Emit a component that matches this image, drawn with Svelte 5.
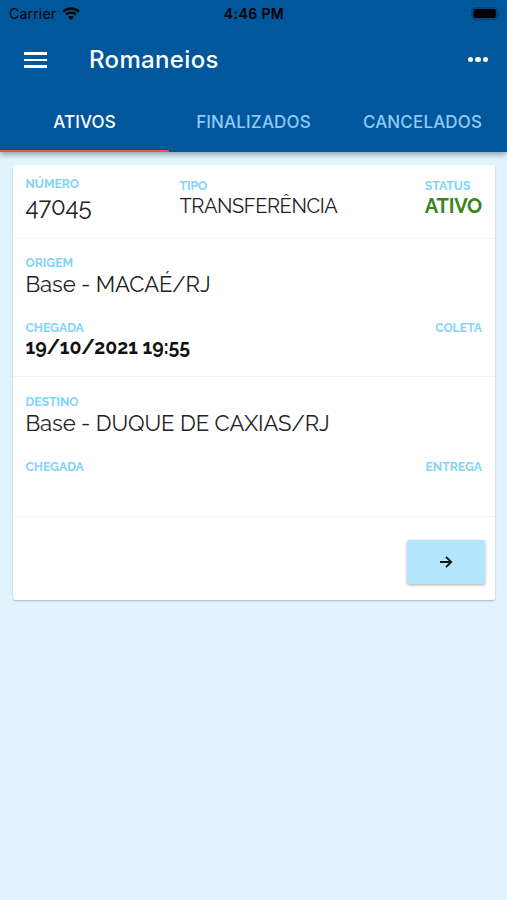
<script lang="ts">
	let activeTab = 'ATIVOS';

	const tabs = ['ATIVOS', 'FINALIZADOS', 'CANCELADOS'];

	const romaneio = {
		numero: '47045',
		tipo: 'TRANSFERÊNCIA',
		status: 'ATIVO',
		origem: 'Base - MACAÉ/RJ',
		chegadaOrigem: '19/10/2021 19:55',
		destino: 'Base - DUQUE DE CAXIAS/RJ'
	};
</script>

<div class="screen">
	<header>
		<div class="status-bar">
			<div class="carrier">
				<span>Carrier</span>
				<svg width="18" height="14" viewBox="0 0 18 14">
					<path d="M1.2 4.6a11.2 11.2 0 0 1 15.6 0" fill="none" stroke="#000" stroke-width="2.5" />
					<path d="M4 7.7a7.2 7.2 0 0 1 10 0" fill="none" stroke="#000" stroke-width="2.3" />
					<path d="M6.1 10.1a4.3 4.3 0 0 1 5.8 0L9 13.1z" />
				</svg>
			</div>
			<span class="clock">4:46 PM</span>
			<svg class="battery" width="30" height="14" viewBox="0 0 30 14">
				<rect x="0.7" y="0.5" width="25.6" height="12.2" rx="3.6" fill="#014a88" stroke="#014379" />
				<rect x="2.4" y="2" width="22.4" height="9" rx="2" />
				<path d="M27.6 4.4c1.7.8 1.7 3.6 0 4.4z" fill="#014379" />
			</svg>
		</div>

		<div class="toolbar">
			<button class="menu" aria-label="Menu">
				<span></span>
				<span></span>
				<span></span>
			</button>
			<h1>Romaneios</h1>
			<button class="more" aria-label="Mais">
				<i></i>
				<i></i>
				<i></i>
			</button>
		</div>

		<nav>
			{#each tabs as tab}
				<button class="tab" class:active={tab === activeTab} on:click={() => (activeTab = tab)}>
					{tab}
				</button>
			{/each}
		</nav>
	</header>

	<main>
		<article class="card">
			<section class="summary">
				<div class="numero">
					<div class="label">NÚMERO</div>
					<div class="value">{romaneio.numero}</div>
				</div>
				<div class="tipo">
					<div class="label">TIPO</div>
					<div class="value">{romaneio.tipo}</div>
				</div>
				<div class="status">
					<div class="label">STATUS</div>
					<div class="value">{romaneio.status}</div>
				</div>
			</section>

			<section class="place origem">
				<div class="label">ORIGEM</div>
				<div class="value">{romaneio.origem}</div>
				<div class="times">
					<div class="label">CHEGADA</div>
					<div class="label">COLETA</div>
				</div>
				<div class="date">{romaneio.chegadaOrigem}</div>
			</section>

			<section class="place destino">
				<div class="label">DESTINO</div>
				<div class="value">{romaneio.destino}</div>
				<div class="times">
					<div class="label">CHEGADA</div>
					<div class="label">ENTREGA</div>
				</div>
			</section>

			<footer>
				<button class="next" aria-label="Abrir">
					<svg width="14" height="14" viewBox="0 0 14 14">
						<path d="M1 7h11M7 1.8L12.2 7 7 12.2" fill="none" stroke="#111" stroke-width="1.8" />
					</svg>
				</button>
			</footer>
		</article>
	</main>
</div>

<style>
	:global(body) {
		background-color: #e1f4fe;
	}

	.screen {
		min-height: 900px;
		background-color: #e1f4fe;
		font-family: Raleway, Lato, sans-serif;
		color: #222;
	}

	button {
		border: 0;
		padding: 0;
		background: none;
		cursor: pointer;
	}

	header {
		position: relative;
		height: 152px;
		background-color: #01579b;
		box-shadow: 0 2px 6px rgba(0, 0, 0, 0.4);
		font-family: Inter, sans-serif;
	}

	.status-bar {
		display: grid;
		grid-template-columns: 1fr auto 1fr;
		align-items: center;
		height: 27px;
		padding: 0 6px 0 9px;
		box-sizing: border-box;
		color: #000;
		font-size: 14px;
	}

	.carrier {
		display: flex;
		align-items: center;
		gap: 6px;
		letter-spacing: 0.2px;
	}

	.clock {
		margin-right: 2px;
		font-weight: 600;
		letter-spacing: 0.4px;
	}

	.battery {
		justify-self: end;
	}

	.toolbar {
		display: flex;
		align-items: center;
		height: 65px;
		padding: 0 19px 0 24px;
	}

	.menu {
		display: flex;
		flex-direction: column;
		gap: 4px;
		width: 23px;
		padding-top: 1px;
	}

	.menu span {
		height: 2.5px;
		background-color: #fff;
	}

	h1 {
		flex-grow: 1;
		margin: 0 0 0 42px;
		color: #fff;
		font-size: 24px;
		font-weight: 500;
		letter-spacing: 0.35px;
		line-height: 30px;
	}

	.more {
		display: flex;
		gap: 2px;
	}

	.more i {
		width: 5.4px;
		height: 5.4px;
		border-radius: 50%;
		background-color: #fff;
	}

	nav {
		display: grid;
		grid-template-columns: repeat(3, 1fr);
		height: 60px;
	}

	.tab {
		border-bottom: 2px solid transparent;
		padding-top: 1px;
		color: #90caf9;
		font-family: inherit;
		font-size: 17px;
		font-weight: 500;
		letter-spacing: 0.15px;
	}

	.tab.active {
		border-bottom-color: #ef4f4c;
		color: #fff;
	}

	main {
		padding: 13px 12px 0 13px;
	}

	.card {
		height: 435px;
		background-color: #fff;
		border-radius: 2px;
		box-shadow: 0 1px 2px rgba(0, 0, 0, 0.25);
	}

	section {
		box-sizing: border-box;
		border-bottom: 1px solid #f2f2f2;
		padding: 0 13px 0 12.5px;
	}

	.label {
		color: #81d4fa;
		font-size: 12.2px;
		font-weight: 700;
		line-height: 14px;
	}

	.value {
		width: max-content;
		font-size: 22.1px;
		font-weight: 400;
		letter-spacing: -0.1px;
		line-height: 28px;
	}

	.summary {
		display: flex;
		height: 74px;
		padding-top: 12px;
	}

	.numero {
		width: 154px;
	}

	.numero .value {
		font-size: 24px;
		line-height: 32px;
	}

	.tipo,
	.status {
		padding-top: 2px;
	}

	.tipo .value,
	.status .value {
		font-size: 20px;
		letter-spacing: -0.4px;
		line-height: 26px;
	}

	.status {
		margin-left: auto;
	}

	.status .value {
		color: #3c8420;
		font-weight: 700;
		letter-spacing: -0.2px;
	}

	.place {
		height: 138px;
		padding-top: 17px;
	}

	.destino {
		height: 140px;
		padding-top: 18px;
	}

	.times {
		display: flex;
		justify-content: space-between;
		padding-top: 23px;
	}

	.date {
		color: #111;
		width: max-content;
		font-size: 19.5px;
		font-weight: 700;
		line-height: 26px;
	}

	footer {
		display: flex;
		justify-content: flex-end;
		padding: 23px 10px 0 0;
	}

	.next {
		display: flex;
		align-items: center;
		justify-content: center;
		width: 78px;
		height: 44px;
		border-radius: 2px;
		background-color: #b3e5fc;
		box-shadow: 0 1px 3px rgba(0, 0, 0, 0.35);
	}
</style>
